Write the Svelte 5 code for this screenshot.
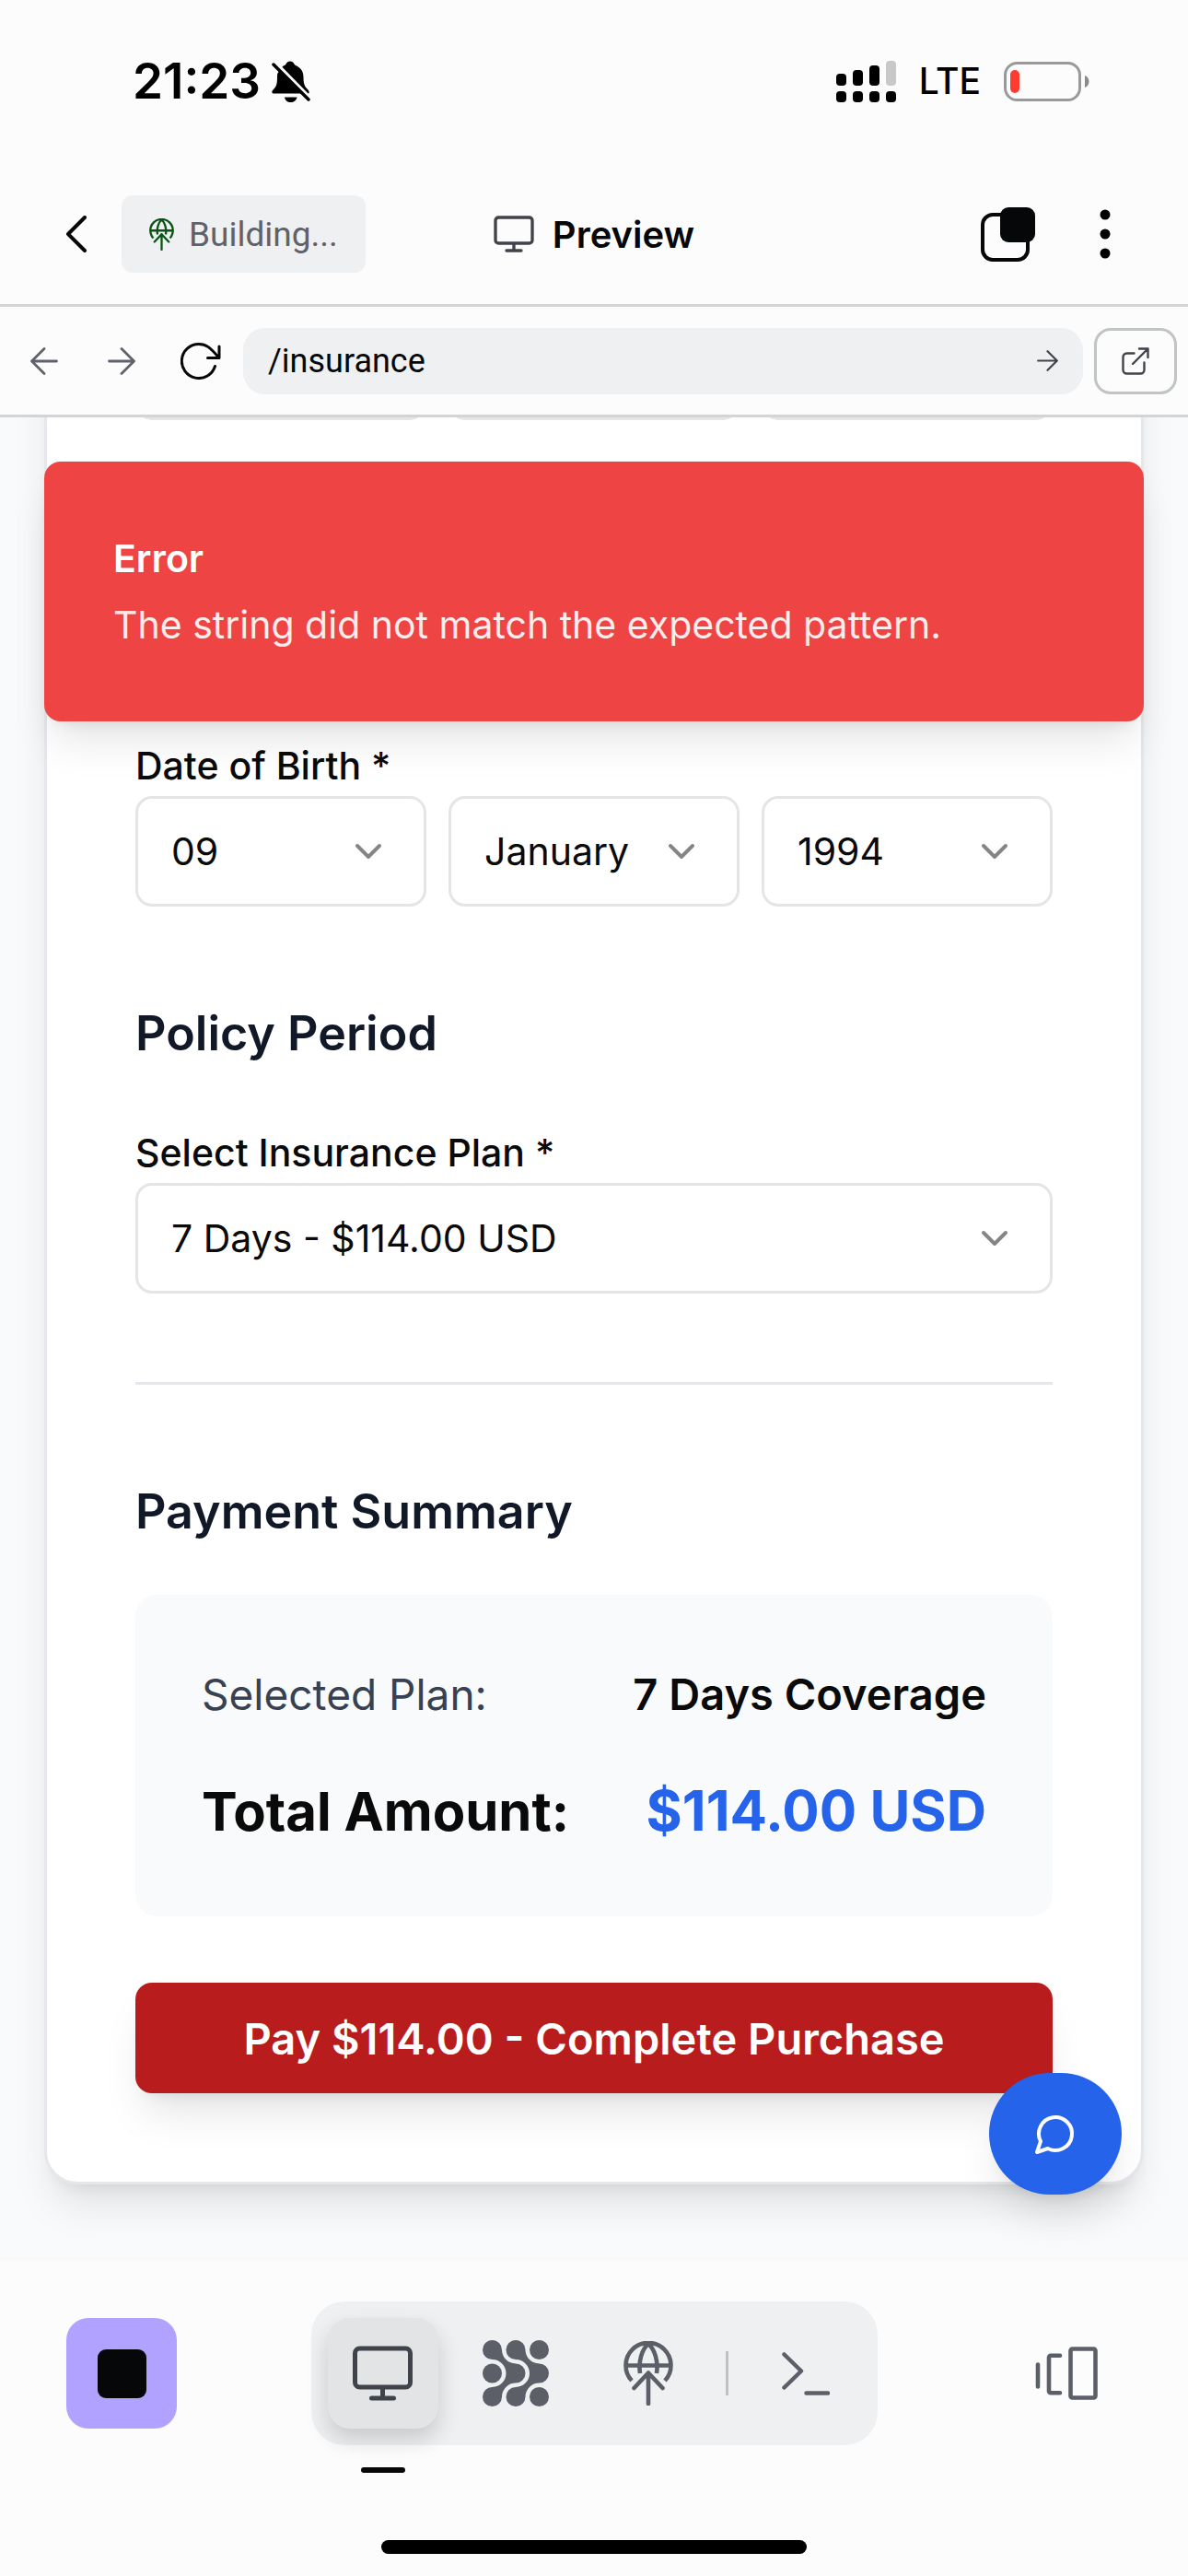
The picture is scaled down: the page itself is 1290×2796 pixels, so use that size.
<script>
  const days = ['09', '10', '11'];
  const months = ['January', 'February', 'March'];
  const years = ['1994', '1995', '1996'];
  const plans = ['7 Days - $114.00 USD'];

  let day = $state('09');
  let month = $state('January');
  let year = $state('1994');
  let plan = $state(plans[0]);
  let path = $state('/insurance');
</script>

{#snippet monitor(cls)}
  <svg class={cls} viewBox="0 0 65 60" fill="none" stroke="currentColor" stroke-width="5" stroke-linecap="round" aria-hidden="true">
    <rect x="2.5" y="3" width="60" height="42" rx="5" />
    <path d="M32.5 47v10M20.5 57h24" />
  </svg>
{/snippet}

{#snippet globe(cls)}
  <svg class={cls} viewBox="0 0 54 70" fill="none" stroke="currentColor" stroke-width="4.6" stroke-linejoin="round" aria-hidden="true">
    <path d="M9 43A24.5 24.5 0 1 1 45 43M2.5 26.5h49M27 3C20 9 16 22 18 35M27 3C34 9 38 22 36 35" />
    <path d="M27 68V34.500M11.500 51 27 34.500 42.500 51" stroke-linecap="round" />
  </svg>
{/snippet}

{#snippet arrow(cls)}
  <svg class={cls} viewBox="0 0 30 30" fill="none" stroke="currentColor" stroke-width="2.8" stroke-linecap="round" stroke-linejoin="round" aria-hidden="true">
    <path d="M1.500 15h27M15 1.500 28.500 15 15 28.500" />
  </svg>
{/snippet}

{#snippet chevron()}
  <svg class="chevron" viewBox="0 0 24 24" fill="none" stroke="currentColor" stroke-width="2" stroke-linecap="round" stroke-linejoin="round" aria-hidden="true">
    <path d="m6 9 6 6 6-6" />
  </svg>
{/snippet}

<div class="shell">
  <div class="status">
    <div class="clock">
      <span class="time">21:23</span>
      <svg class="bell" viewBox="0 0 42 45" aria-hidden="true">
        <path d="M12 6C14 5 15 4.500 15.500 3.500 17 -.5 23 -.5 24.500 3.500 25 4.500 26 5 28 6 33 9 34.500 13 34.500 18 34.500 25 36 28 39 31 41 33 41 35 40 35.500H2C0 35.500 -.5 33 2 31 5 28 6 25 6 18 6 16 6 15 6.500 13.500Z" />
        <path d="M14 39.500h13.500C27 43 24 45 20.500 45S14.500 43 14 39.500Z" />
        <path d="M3 1 43 42" stroke="#fcfcfc" stroke-width="4" />
        <path d="M2 4 40 42" stroke="#000" stroke-width="3.500" stroke-linecap="round" />
      </svg>
    </div>
    <div class="radio">
      <svg class="signal" viewBox="0 0 65 45" aria-hidden="true">
        <rect x="0" y="14" width="11" height="13" rx="4" />
        <rect x="18" y="10" width="11" height="17" rx="4" />
        <rect x="36" y="5" width="11" height="22" rx="4" />
        <rect x="54" y="0" width="11" height="27" rx="4" fill="#c8c8c8" />
        <rect x="0" y="33" width="11" height="12" rx="4" />
        <rect x="18" y="33" width="11" height="12" rx="4" />
        <rect x="36" y="33" width="11" height="12" rx="4" />
        <rect x="54" y="33" width="11" height="12" rx="4" />
      </svg>
      <span class="lte">LTE</span>
      <svg class="battery" viewBox="0 0 93 43" aria-hidden="true">
        <rect x="1.500" y="1.500" width="81" height="40" rx="13" fill="none" stroke="#999" stroke-width="3" />
        <rect x="7" y="9" width="10" height="25" rx="5" fill="#ff3b30" />
        <path d="M88 15c6 2 6 11 0 13z" fill="#8a8a8a" />
      </svg>
    </div>
  </div>

  <header class="header">
    <div class="header-left">
      <button class="plain" aria-label="Back">
        <svg class="back" viewBox="0 0 22 40" fill="none" stroke="currentColor" stroke-width="4" stroke-linecap="round" stroke-linejoin="round"><path d="M20 2 2 20l18 18" /></svg>
      </button>
      <button class="chip">{@render globe('chip-globe')}<span>Building...</span></button>
    </div>
    <h1 class="title">{@render monitor('title-icon')}<span>Preview</span></h1>
    <div class="header-right">
      <button class="plain" aria-label="Tabs">
        <svg class="tabs" viewBox="0 0 59 59">
          <rect x="2" y="8" width="49" height="49" rx="11" fill="none" stroke="currentColor" stroke-width="4" />
          <rect x="21" y="0" width="38" height="38" rx="9" fill="currentColor" />
        </svg>
      </button>
      <button class="plain" aria-label="More">
        <svg class="dots" viewBox="0 0 12 54"><circle cx="6" cy="6" r="5.500" /><circle cx="6" cy="27" r="5.500" /><circle cx="6" cy="48" r="5.500" /></svg>
      </button>
    </div>
  </header>

  <nav class="address">
    <button class="nav" aria-label="Previous page">{@render arrow('arrow flip')}</button>
    <button class="nav" aria-label="Next page">{@render arrow('arrow')}</button>
    <button class="nav dark" aria-label="Reload">
      <svg class="reload" viewBox="0 0 44 40" fill="none" stroke="currentColor" stroke-width="3" stroke-linecap="round" stroke-linejoin="round">
        <path d="M37.500 25.500A18.500 18.500 0 1 1 20 1.500C28 1.500 32 5 41.500 16M42 4v12.500H29.500" />
      </svg>
    </button>
    <div class="url">
      <input aria-label="Path" bind:value={path} />
      <button class="plain go" aria-label="Go">{@render arrow('go-arrow')}</button>
    </div>
    <button class="external" aria-label="Open in new window">
      <svg viewBox="0 0 30 30" fill="none" stroke="currentColor" stroke-width="2.400" stroke-linecap="round" stroke-linejoin="round">
        <path d="M13.500 6.500h-8a4 4 0 0 0-4 4v14a4 4 0 0 0 4 4h15a4 4 0 0 0 4-4v-8M12 18 28.500 1.500M19 1.500h9.500V11" />
      </svg>
    </button>
  </nav>

  <main class="viewport">
    <form class="card" onsubmit={(e) => e.preventDefault()}>
      <div class="row earlier" aria-hidden="true"><div class="box"></div><div class="box"></div><div class="box"></div></div>

      <label class="label" for="day">Date of Birth *</label>
      <div class="row">
        <div class="select">
          <select id="day" bind:value={day}>{#each days as d}<option>{d}</option>{/each}</select>
          {@render chevron()}
        </div>
        <div class="select">
          <select aria-label="Month" bind:value={month}>{#each months as m}<option>{m}</option>{/each}</select>
          {@render chevron()}
        </div>
        <div class="select">
          <select aria-label="Year" bind:value={year}>{#each years as y}<option>{y}</option>{/each}</select>
          {@render chevron()}
        </div>
      </div>

      <section class="section">
        <h2>Policy Period</h2>
        <label class="label" for="plan">Select Insurance Plan *</label>
        <div class="select">
          <select id="plan" bind:value={plan}>{#each plans as p}<option>{p}</option>{/each}</select>
          {@render chevron()}
        </div>
      </section>

      <hr />

      <h2>Payment Summary</h2>
      <dl class="summary">
        <div class="line"><dt>Selected Plan:</dt><dd>7 Days Coverage</dd></div>
        <div class="line total"><dt>Total Amount:</dt><dd>$114.00 USD</dd></div>
      </dl>
      <button class="pay" type="submit">Pay $114.00 - Complete Purchase</button>
    </form>

    <div class="toast" role="alert">
      <strong>Error</strong>
      <p>The string did not match the expected pattern.</p>
    </div>

    <button class="chat" aria-label="Chat">
      <svg viewBox="0 0 24 24" fill="none" stroke="currentColor" stroke-width="2" stroke-linecap="round" stroke-linejoin="round"><path d="M7.900 20A9 9 0 1 0 4 16.100L2 22Z" /></svg>
    </button>
  </main>

  <footer class="dock">
    <div class="dock-row">
      <button class="stop" aria-label="Stop"><span></span></button>
      <div class="tools">
        <button class="tool active" aria-label="Preview">{@render monitor('monitor')}</button>
        <button class="tool" aria-label="Agent">
          <svg class="mesh" viewBox="0 0 72 72" fill="currentColor">
            <path d="M10.500 21A10.500 10.500 0 1 1 21 10.500A15 15 0 0 0 36 25.500A10.500 10.500 0 0 1 36 46.500A15 15 0 0 0 21 61.500A10.500 10.500 0 1 1 10.500 51A15 15 0 0 0 10.500 21Z" />
            <path d="M36 21A10.500 10.500 0 1 1 46.500 10.500A15 15 0 0 0 61.500 25.500A10.500 10.500 0 0 1 61.500 46.500A15 15 0 0 0 46.500 61.500A10.500 10.500 0 1 1 36 51A15 15 0 0 0 36 21Z" />
            <circle cx="61.500" cy="10.500" r="10.500" /><circle cx="10.500" cy="36" r="10.500" /><circle cx="61.500" cy="61.500" r="10.500" />
          </svg>
        </button>
        <button class="tool" aria-label="Publish">{@render globe('globe')}</button>
        <span class="divider"></span>
        <button class="tool" aria-label="Shell">
          <svg class="prompt" viewBox="0 0 52 47" fill="none" stroke="currentColor" stroke-width="4.500" stroke-linecap="round" stroke-linejoin="round"><path d="M2.500 2.500 21 20.500 2.500 38.500M26.500 44.500H50" /></svg>
        </button>
      </div>
      <button class="switcher" aria-label="Switch panes">
        <svg viewBox="0 0 68 58" fill="none" stroke="currentColor" stroke-width="4.600" stroke-linecap="round" stroke-linejoin="round">
          <path d="M3 19.500v24M27 9.700H17a2 2 0 0 0-2 2v36.600a2 2 0 0 0 2 2h10" /><rect x="38.500" y="2.500" width="27" height="53" rx="2" />
        </svg>
      </button>
    </div>
    <div class="marker"></div>
    <div class="home"></div>
  </footer>
</div>

<style>
  :global(body) {
    margin: 0;
    background: #fcfcfc;
  }
  .shell,
  .shell * {
    box-sizing: border-box;
  }
  .shell {
    height: 100vh;
    display: flex;
    flex-direction: column;
    background: #fcfcfc;
    color: #0a0a0a;
    font-family: Inter, "Liberation Sans", sans-serif;
    font-size: 41px;
  }
  button,
  input,
  select {
    font: inherit;
    color: inherit;
    margin: 0;
  }
  button {
    border: 0;
    padding: 0;
    background: none;
    cursor: pointer;
    display: flex;
    align-items: center;
    justify-content: center;
  }
  svg {
    display: block;
    flex: none;
  }
  h1,
  h2,
  p,
  dl,
  dd {
    margin: 0;
  }

  .status {
    display: flex;
    justify-content: space-between;
    align-items: center;
    padding: 58px 107px 60px 144px;
    line-height: 60px;
    color: #000;
  }
  .clock,
  .radio {
    display: flex;
    align-items: center;
  }
  .clock {
    gap: 12px;
  }
  .time {
    font-size: 53px;
    font-weight: 600;
  }
  .bell {
    width: 42px;
    height: 45px;
  }
  .radio {
    gap: 25px;
  }
  .signal {
    width: 65px;
    height: 45px;
  }
  .lte {
    font-size: 39px;
    font-weight: 500;
  }
  .battery {
    width: 93px;
    height: 43px;
  }

  .header {
    display: grid;
    grid-template-columns: 1fr auto 1fr;
    align-items: center;
    height: 155px;
    padding: 0 72px;
    border-bottom: 3px solid #d3d4d6;
    color: #050708;
  }
  .header-left,
  .header-right,
  .title {
    display: flex;
    align-items: center;
  }
  .header-left {
    gap: 38px;
  }
  .back {
    width: 22px;
    height: 40px;
  }
  .chip {
    height: 84px;
    padding: 0 30px;
    gap: 16px;
    border-radius: 12px;
    background: #eff0f2;
    color: #5f626a;
    font-family: Roboto, sans-serif;
    font-size: 37px;
  }
  .chip-globe {
    width: 27px;
    height: 35px;
    color: #0b5417;
  }
  .title {
    gap: 20px;
    font-size: 40px;
    font-weight: 600;
  }
  .title-icon {
    width: 44px;
    height: 40px;
    color: #40434a;
  }
  .header-right {
    justify-content: flex-end;
    gap: 70px;
    padding-right: 12px;
  }
  .tabs {
    width: 59px;
    height: 59px;
  }
  .dots {
    width: 12px;
    height: 54px;
  }

  .address {
    display: flex;
    align-items: center;
    gap: 12px;
    height: 120px;
    padding: 0 12px;
    border-bottom: 3px solid #d3d4d6;
    color: #5f626a;
  }
  .nav {
    width: 72px;
    height: 72px;
  }
  .dark {
    padding-left: 4px;
    color: #050708;
  }
  .arrow {
    width: 30px;
    height: 30px;
  }
  .flip {
    transform: scaleX(-1);
  }
  .reload {
    width: 44px;
    height: 40px;
  }
  .url {
    flex: 1;
    min-width: 0;
    height: 72px;
    display: flex;
    align-items: center;
    padding: 0 27px;
    border-radius: 24px;
    background: #eff0f2;
    color: #050708;
  }
  .url input {
    flex: 1;
    min-width: 0;
    padding: 0;
    border: 0;
    background: none;
    outline: 0;
    font-family: Roboto, sans-serif;
    font-size: 36px;
  }
  .go,
  .external {
    color: #40434a;
  }
  .go-arrow {
    width: 23px;
    height: 23px;
  }
  .external {
    width: 90px;
    height: 72px;
    border: 3px solid #c0c4c4;
    border-radius: 18px;
  }
  .external svg {
    width: 30px;
    height: 30px;
  }

  .viewport {
    position: relative;
    flex: 1;
    min-height: 0;
    overflow: hidden;
    display: flex;
    flex-direction: column;
    justify-content: flex-end;
    padding: 0 48px 83px;
    background: #f9fafc;
  }
  .card {
    flex: none;
    padding: 96px;
    border: 3px solid #e5e7eb;
    border-radius: 36px;
    background: #fff;
    box-shadow: 0 30px 45px -9px rgba(0, 0, 0, 0.1), 0 12px 18px -12px rgba(0, 0, 0, 0.1);
  }
  .row {
    display: grid;
    grid-template-columns: repeat(3, 1fr);
    gap: 24px;
  }
  .earlier {
    margin-bottom: 336px;
  }
  .box {
    height: 120px;
    border: 3px solid #e5e5e5;
    border-radius: 18px;
  }
  .label {
    display: block;
    padding: 18px 0 12px;
    font-weight: 500;
    line-height: 42px;
  }
  .select {
    display: grid;
    align-items: center;
  }
  .select select {
    grid-area: 1 / 1;
    width: 100%;
    height: 120px;
    padding: 0 36px;
    border: 3px solid #e5e5e5;
    border-radius: 18px;
    background: #fff;
    appearance: none;
  }
  .chevron {
    grid-area: 1 / 1;
    justify-self: end;
    width: 48px;
    height: 48px;
    margin-right: 39px;
    color: #858585;
    pointer-events: none;
  }
  .section {
    margin-top: 96px;
  }
  h2 {
    margin-bottom: 48px;
    font-size: 52px;
    line-height: 84px;
    font-weight: 600;
    color: #111827;
  }
  hr {
    height: 3px;
    margin: 96px 0;
    border: 0;
    background: #e5e7eb;
  }
  .summary {
    display: flex;
    flex-direction: column;
    gap: 48px;
    padding: 72px;
    border-radius: 24px;
    background: #f9fafb;
  }
  .line {
    display: flex;
    justify-content: space-between;
    align-items: baseline;
    font-size: 47px;
    line-height: 72px;
  }
  .line dt {
    font-size: 46px;
    color: #374151;
  }
  .line dd {
    font-weight: 600;
  }
  .line.total {
    line-height: 84px;
  }
  .total dt,
  .total dd {
    font-weight: 700;
    color: #0a0a0a;
  }
  .total dt {
    font-size: 58px;
  }
  .total dd {
    font-size: 60px;
    color: #2563eb;
  }
  .pay {
    width: 100%;
    height: 120px;
    margin-top: 72px;
    border-radius: 18px;
    background: #b91c1c;
    color: #fff;
    font-size: 47px;
    font-weight: 600;
    box-shadow: 0 30px 45px -9px rgba(0, 0, 0, 0.1), 0 12px 18px -12px rgba(0, 0, 0, 0.1);
  }
  .toast {
    position: absolute;
    top: 48px;
    left: 48px;
    right: 48px;
    display: flex;
    flex-direction: column;
    gap: 12px;
    padding: 75px;
    border-radius: 18px;
    background: #ef4444;
    color: #fff;
    line-height: 60px;
    box-shadow: 0 30px 45px -9px rgba(0, 0, 0, 0.1), 0 12px 18px -12px rgba(0, 0, 0, 0.1);
  }
  .toast strong {
    font-weight: 600;
  }
  .toast p {
    opacity: 0.9;
  }
  .chat {
    position: absolute;
    right: 72px;
    bottom: 72px;
    width: 144px;
    height: 132px;
    border-radius: 66px;
    background: #2563eb;
    color: #fff;
    box-shadow: 0 30px 45px -9px rgba(0, 0, 0, 0.1), 0 12px 18px -12px rgba(0, 0, 0, 0.1);
  }
  .chat svg {
    width: 48px;
    height: 48px;
  }

  .dock {
    padding: 44px 72px 24px;
    color: #5c5f67;
  }
  .dock-row {
    display: grid;
    grid-template-columns: 120px 1fr 120px;
    align-items: center;
    justify-items: center;
  }
  .stop,
  .tool,
  .switcher {
    width: 120px;
    height: 120px;
    border-radius: 24px;
  }
  .stop {
    background: #b1a2ff;
  }
  .stop span {
    width: 53px;
    height: 53px;
    border-radius: 9px;
    background: #050708;
  }
  .tools {
    display: flex;
    align-items: center;
    gap: 24px;
    padding: 18px;
    border-radius: 36px;
    background: #eff0f2;
  }
  .active {
    background: #e3e4e6;
    color: #40434a;
    box-shadow: 0 12px 24px rgba(0, 0, 0, 0.16);
  }
  .monitor {
    width: 65px;
    height: 60px;
  }
  .mesh {
    width: 72px;
    height: 72px;
  }
  .globe {
    width: 54px;
    height: 70px;
  }
  .divider {
    width: 3px;
    height: 48px;
    background: #c0c2c5;
  }
  .prompt {
    width: 52px;
    height: 47px;
  }
  .switcher svg {
    width: 68px;
    height: 58px;
  }
  .marker {
    width: 48px;
    height: 6px;
    margin: 24px 0 73px 320px;
    border-radius: 3px;
    background: #050708;
  }
  .home {
    width: 462px;
    height: 15px;
    margin: 0 auto;
    border-radius: 8px;
    background: #000;
  }
</style>
